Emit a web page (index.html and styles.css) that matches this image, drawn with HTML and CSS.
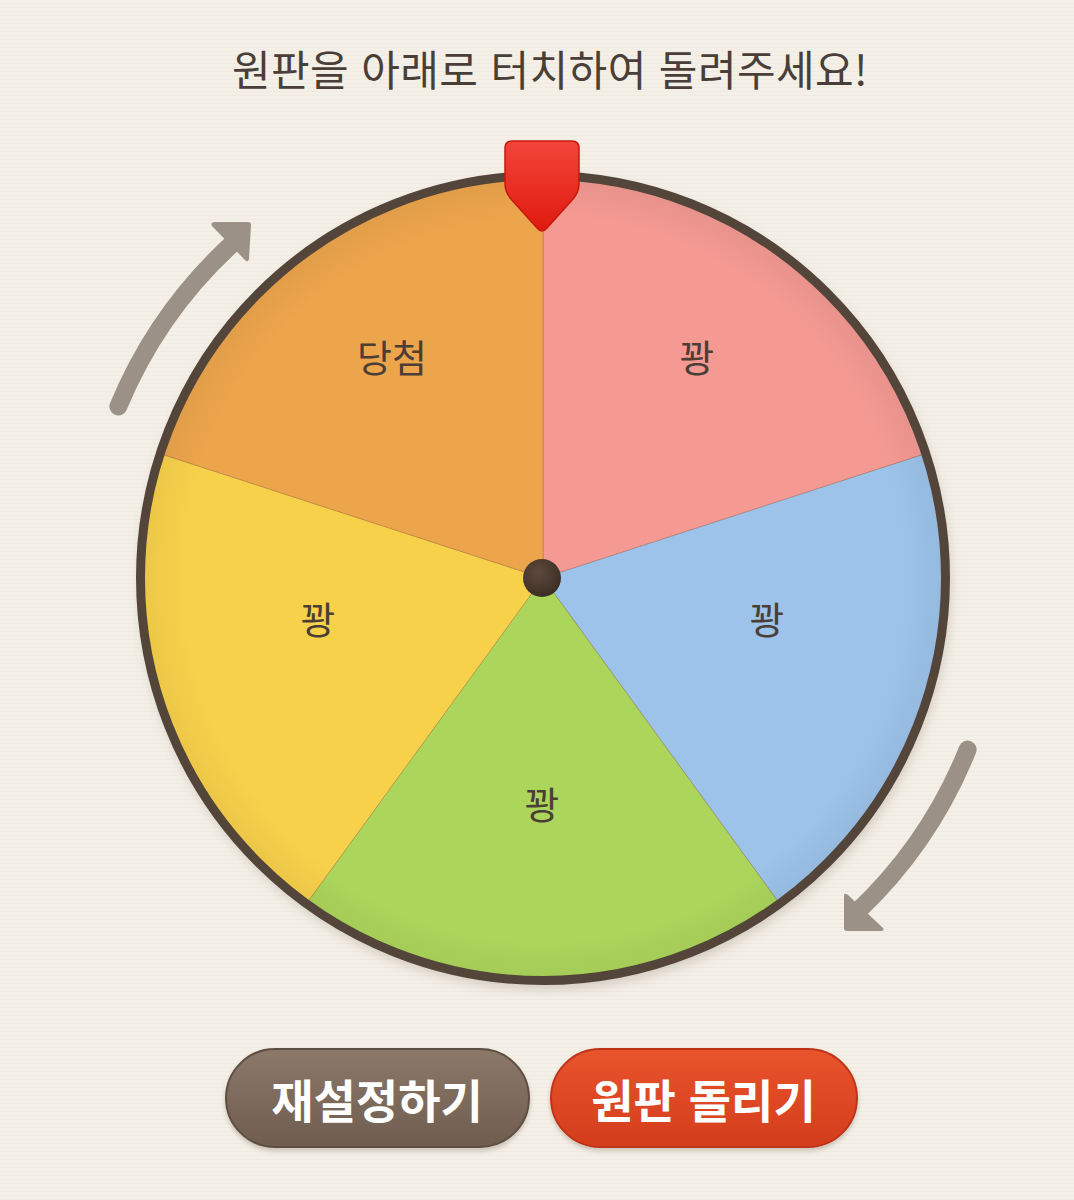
FILE: index.html
```html
<!DOCTYPE html>
<html lang="ko">
<head>
    <meta charset="UTF-8">
    <meta name="viewport" content="width=device-width, initial-scale=1.0">
    <title>원판 돌리기</title>
    <link rel="stylesheet" href="styles.css">
</head>
<body>
    <div class="page">
        <header class="title-bar">
            <h1 class="title">원판을 아래로 터치하여 돌려주세요!</h1>
        </header>

        <svg class="wheel" viewBox="0 120 1074 880" width="1074" height="880">
            <defs>
                <radialGradient id="shade" cx="543" cy="578" r="400" gradientUnits="userSpaceOnUse">
                    <stop offset="0.9" stop-color="#000" stop-opacity="0"/>
                    <stop offset="1" stop-color="#000" stop-opacity="0.05"/>
                </radialGradient>
                <linearGradient id="pin" x1="0" y1="0" x2="0" y2="1">
                    <stop offset="0" stop-color="#f3453a"/>
                    <stop offset="1" stop-color="#df1a0f"/>
                </linearGradient>
                <radialGradient id="hub" cx="0.4" cy="0.35" r="0.7">
                    <stop offset="0" stop-color="#5e4a3d"/>
                    <stop offset="1" stop-color="#3a2c24"/>
                </radialGradient>
                <filter id="soft" x="-10%" y="-10%" width="120%" height="120%">
                    <feGaussianBlur stdDeviation="6"/>
                </filter>
            </defs>

            <!-- rotate arrows -->
            <g class="arrow">
                <path class="arrow-line" d="M118.4 406.4 A458 458 0 0 1 232 244"/>
                <path class="arrow-head" d="M215 222 L248 222 Q251 222 251 225 L249 259 Q248 263 245 260 L212 226 Q210 222 215 222 Z"/>
                <path class="arrow-line" d="M967.6 749.6 A458 458 0 0 1 858 911"/>
                <path class="arrow-head" d="M844 896 Q844 892 848 895 L883 928 Q885 931 881 931 L847 931 Q844 931 844 928 Z"/>
            </g>

            <!-- wheel -->
            <circle cx="545" cy="584" r="405" fill="#6b5848" opacity="0.25" filter="url(#soft)"/>
            <g class="slices">
                <path fill="#f49a93" d="M543 578 L543 178 A400 400 0 0 1 923.4 454.4 Z"/>
                <path fill="#9dc3ea" d="M543 578 L923.4 454.4 A400 400 0 0 1 778.1 901.6 Z"/>
                <path fill="#acd65b" d="M543 578 L778.1 901.6 A400 400 0 0 1 307.9 901.6 Z"/>
                <path fill="#f8d14b" d="M543 578 L307.9 901.6 A400 400 0 0 1 162.6 454.4 Z"/>
                <path fill="#eda54c" d="M543 578 L162.6 454.4 A400 400 0 0 1 543 178 Z"/>
            </g>
            <circle cx="543" cy="578" r="400" fill="url(#shade)"/>
            <circle class="rim" cx="543" cy="578" r="402.5"/>

            <g class="labels">
                <text x="392" y="372">당첨</text>
                <text x="697" y="372">꽝</text>
                <text x="767" y="634">꽝</text>
                <text x="542" y="819">꽝</text>
                <text x="318" y="634">꽝</text>
            </g>

            <circle cx="542" cy="578" r="19" fill="url(#hub)"/>

            <!-- pointer -->
            <path class="pointer" d="M512 141 H572 Q579 141 579 148 V184 Q579 192 573 199 L547 228 Q542 234 537 228 L511 199 Q505 192 505 184 V148 Q505 141 512 141 Z"/>
        </svg>

        <div class="actions">
            <button class="btn btn-reset">재설정하기</button>
            <button class="btn btn-spin">원판 돌리기</button>
        </div>
    </div>
</body>
</html>
```

FILE: styles.css
```css
:root {
    --bg: #f4f0e7;
    --ink: #4a3f38;
    --rim: #54453b;
    --arrow: #9b9186;
}
body {
    margin: 0;
    background-color: var(--bg);
    background-image: repeating-linear-gradient(0deg, rgba(120,100,70,0.035) 0 1px, transparent 1px 4px);
    font-family: 'Noto Sans CJK KR', 'Noto Sans', sans-serif;
    color: var(--ink);
}
.page {
    width: 1074px;
    height: 1200px;
    overflow: hidden;
}
.title-bar {
    height: 120px;
    display: flex;
    justify-content: center;
    align-items: flex-start;
    padding-left: 26px;
}
.title {
    margin: 0;
    padding-top: 39px;
    font-size: 42px;
    line-height: 58px;
    font-weight: 400;
    letter-spacing: 0.4px;
    color: var(--ink);
}
.wheel {
    display: block;
}
.arrow-line {
    fill: none;
    stroke: var(--arrow);
    stroke-width: 18;
    stroke-linecap: round;
}
.arrow-head {
    fill: var(--arrow);
}
.slices path {
    stroke: rgba(120,60,30,0.25);
    stroke-width: 1;
}
.rim {
    fill: none;
    stroke: var(--rim);
    stroke-width: 9;
}
.labels text {
    font-family: 'Noto Sans CJK KR', sans-serif;
    font-size: 38px;
    fill: #4a3e36;
    text-anchor: middle;
}
.pointer {
    fill: url(#pin);
    stroke: #c8180d;
    stroke-width: 1.5;
}
.actions {
    display: flex;
    justify-content: center;
    gap: 20px;
    margin-top: 48px;
    padding-left: 8px;
}
.btn {
    height: 100px;
    border-radius: 50px;
    font-family: 'Noto Sans CJK KR', sans-serif;
    font-size: 46px;
    font-weight: 700;
    letter-spacing: 0;
    color: #fff;
    cursor: pointer;
    box-shadow: 0 3px 4px rgba(80,60,40,0.25);
}
.btn-reset {
    width: 305px;
    background: linear-gradient(#8c7868, #6f5d50);
    border: 2px solid #5f4f43;
}
.btn-spin {
    width: 308px;
    background: linear-gradient(#e8542c, #d43d1c);
    border: 2px solid #bf3418;
}
```
